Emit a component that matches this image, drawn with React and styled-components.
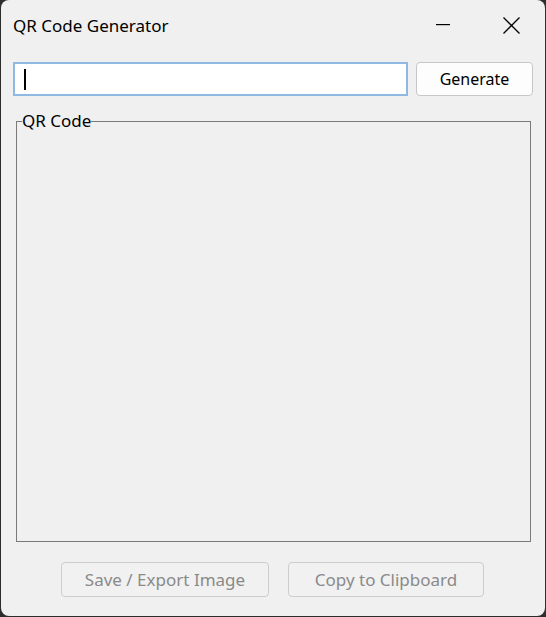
import styled, { createGlobalStyle } from 'styled-components';

const Global = createGlobalStyle`
  html, body {
    margin: 0;
    padding: 0;
    background: #2d2d2d;
  }
  body {
    font-family: 'Noto Sans', 'Open Sans', sans-serif;
  }
`;

const Window = styled.div`
  margin-left: 1px;
  width: 544px;
  height: 616px;
  background: #f0f0f0;
  border-radius: 8px;
  display: flex;
  flex-direction: column;
  overflow: hidden;
`;

const TitleBar = styled.div`
  height: 50px;
  display: flex;
  align-items: center;
  padding-left: 12px;
`;

const Title = styled.div`
  flex: 1;
  font-size: 17px;
  color: #000;
`;

const Caption = styled.div`
  width: 68px;
  height: 50px;
  display: flex;
  align-items: center;
  justify-content: center;
`;

const InputRow = styled.div`
  margin: 12px 12px 0 12px;
  display: flex;
  gap: 8px;
  height: 34px;
`;

const TextBox = styled.div`
  width: 395px;
  box-sizing: border-box;
  border: 2px solid #8fb9e3;
  background: #fff;
  display: flex;
  align-items: center;
  padding-left: 9px;
`;

const Caret = styled.span`
  width: 2px;
  height: 21px;
  background: #000;
`;

const Button = styled.button`
  box-sizing: border-box;
  height: ${(p) => p.$h || 34}px;
  width: ${(p) => p.$w}px;
  padding: 0 0 1px;
  border-radius: 4px;
  font-family: inherit;
  font-size: ${(p) => (p.disabled ? 17 : 16)}px;
  border: 1px solid ${(p) => (p.disabled ? '#cdcdcd' : '#c6c6c6')};
  background: ${(p) => (p.disabled ? '#f1f1f1' : '#fdfdfd')};
  color: ${(p) => (p.disabled ? '#8a8a8a' : '#000')};
`;

const Group = styled.fieldset`
  margin: 14px 14px 0 15px;
  padding: 0 5px;
  height: 432px;
  box-sizing: border-box;
  border: 1px solid #7a7a7a;
  min-width: 0;
`;

const Legend = styled.legend`
  padding: 0;
  font-size: 17px;
  line-height: 22px;
  color: #000;
`;

const Footer = styled.div`
  margin-top: 20px;
  display: flex;
  justify-content: center;
  gap: 19px;
  padding-right: 1px;
`;

export default function App() {
  return (
    <>
      <Global />
      <Window>
        <TitleBar>
          <Title>QR Code Generator</Title>
          <Caption>
            <svg width="14" height="2" viewBox="0 0 14 2">
              <rect x="0" y="0" width="14" height="1.2" fill="#000" />
            </svg>
          </Caption>
          <Caption>
            <svg width="17" height="17" viewBox="0 0 17 17">
              <path d="M0.5 0.5 L16.5 16.5 M16.5 0.5 L0.5 16.5" stroke="#000" strokeWidth="1.3" />
            </svg>
          </Caption>
        </TitleBar>
        <InputRow>
          <TextBox>
            <Caret />
          </TextBox>
          <Button $w={117}>Generate</Button>
        </InputRow>
        <Group>
          <Legend>QR Code</Legend>
        </Group>
        <Footer>
          <Button disabled $w={208} $h={35}>Save / Export Image</Button>
          <Button disabled $w={196} $h={35}>Copy to Clipboard</Button>
        </Footer>
      </Window>
    </>
  );
}
